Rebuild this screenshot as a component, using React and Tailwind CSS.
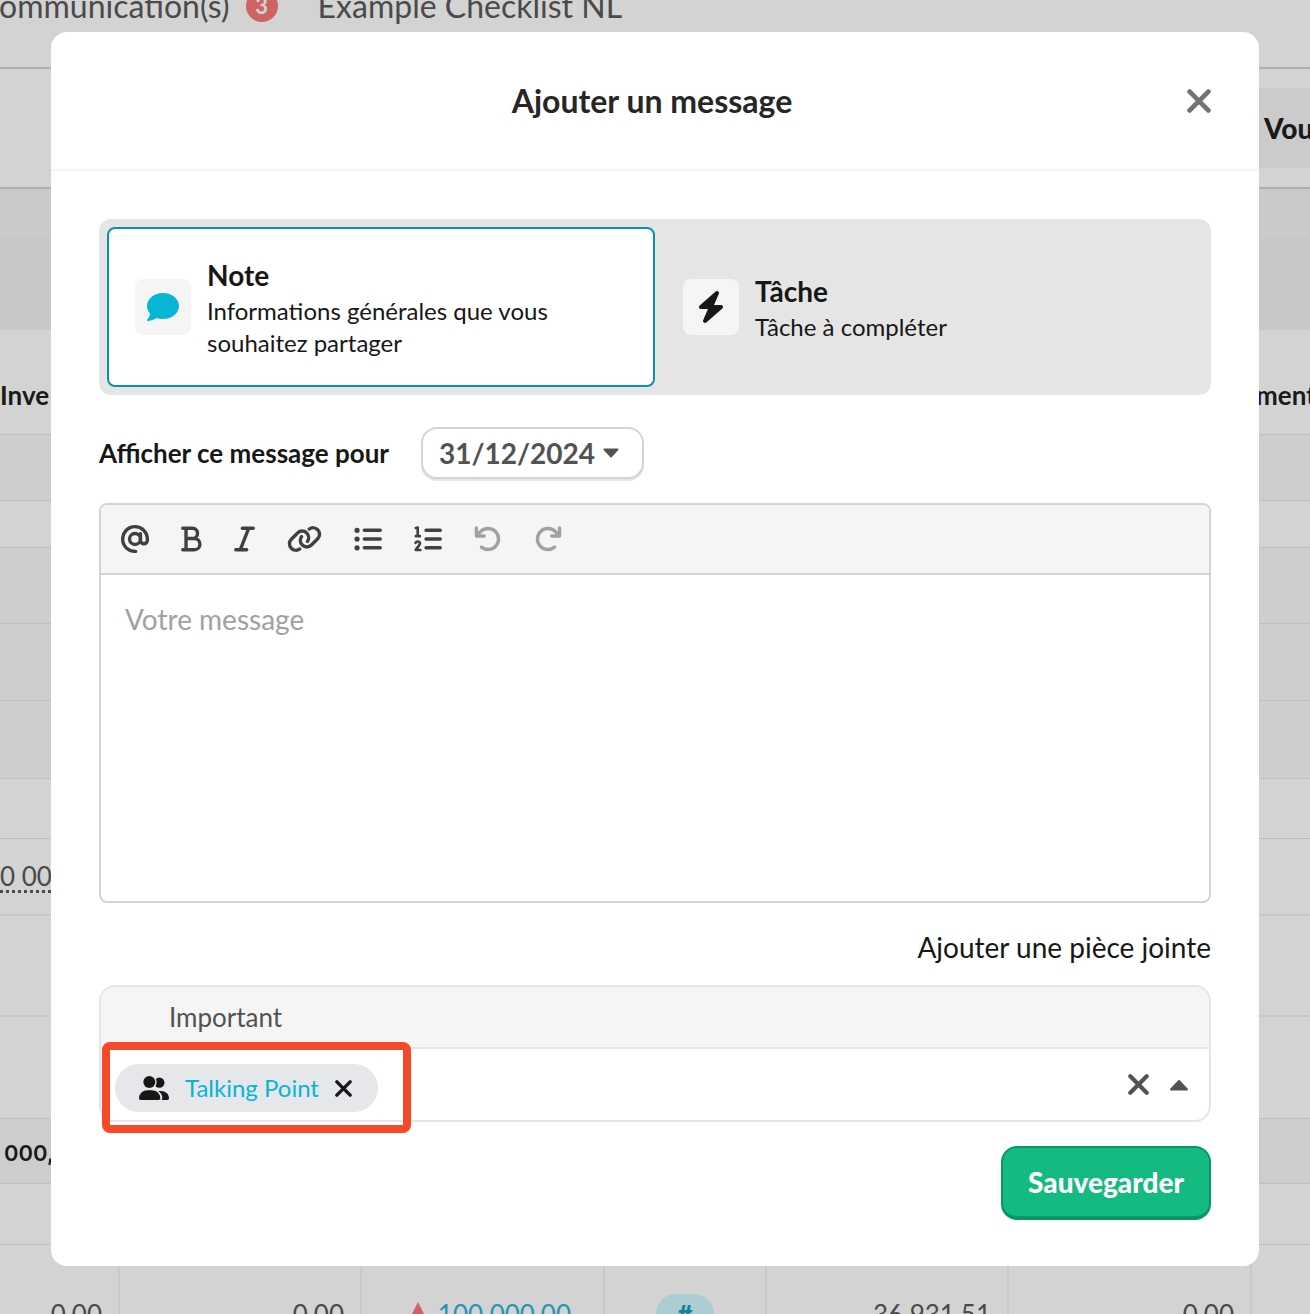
import React from 'react';
import { FaBolt, FaComment } from 'react-icons/fa6';

const ROWS = [
  { className: 'h-[66px] bg-[#cecece] border-b border-[#bfbfbf]' },
  { className: 'h-[47px] border-b border-[#bfbfbf]' },
  { className: 'h-[76px] bg-[#cecece] border-b border-[#bfbfbf]' },
  { className: 'h-[77px] bg-[#cecece] border-b border-[#bfbfbf]' },
  { className: 'h-[78px] bg-[#cecece] border-b border-[#bfbfbf]' },
  { className: 'h-[60px] border-b border-[#bfbfbf]' },
  {
    className: 'h-[77px] border-b-2 border-[#c9c9c9]',
    first: <span className="underline decoration-dotted decoration-3 underline-offset-4">0 00</span>,
  },
  { className: 'h-[101px] border-b-2 border-[#c9c9c9]' },
  { className: 'h-[102px] border-b border-[#bfbfbf]' },
  {
    className: 'h-[65px] bg-[#cdcdcd] border-b border-[#bfbfbf]',
    first: <span className="pl-1 font-['Inter',sans-serif] text-[22px] font-semibold text-[#1a1a1a]">000,</span>,
  },
  { className: 'h-[61px] border-b border-[#bfbfbf]' },
];

const CrossIcon = ({ className, strokeWidth = 4 }) => (
  <svg className={className} viewBox="0 0 20 20" fill="none" stroke="currentColor" strokeWidth={strokeWidth} strokeLinecap="round">
    <path d="M2.2 2.2L17.8 17.8M17.8 2.2L2.2 17.8" />
  </svg>
);

const CaretDown = ({ className }) => (
  <svg className={className} viewBox="0 0 18 11" fill="currentColor" stroke="currentColor" strokeWidth="2" strokeLinejoin="round">
    <path d="M1.5 1.5H16.5L9 9.5Z" />
  </svg>
);

const CaretUp = ({ className }) => (
  <svg className={className} viewBox="0 0 20 12" fill="currentColor" stroke="currentColor" strokeWidth="2" strokeLinejoin="round">
    <path d="M2 10.5H18L10 2Z" />
  </svg>
);

const UsersIcon = ({ className }) => (
  <svg className={className} viewBox="0 0 90 72" fill="currentColor">
    <circle cx="61" cy="20" r="15.5" />
    <circle cx="31" cy="18" r="22" className="fill-gray-200" />
    <circle cx="31" cy="18" r="18" />
    <path d="M0 67C0 53 12 43 26 43h12c14 0 26 10 26 24 0 3-2 5-5 5H5c-3 0-5-2-5-5z" />
    <path d="M57 45h9c13 0 24 9 24 22 0 3-2 5-5 5H67c2-2 3-4 3-6 0-9-5-16-13-21z" />
  </svg>
);

const TOOLS = [
  {
    label: 'Mention',
    width: 'w-7',
    viewBox: '0 0 512 512',
    icon: (
      <>
        <circle cx="256" cy="256" r="100" />
        <path d="M356 160v120a63 63 0 0 0 126 0v-24A226 226 0 1 0 268 482" />
      </>
    ),
  },
  {
    label: 'Gras',
    width: 'w-[21px]',
    viewBox: '0 0 384 512',
    icon: <path d="M32 60H208a94 94 0 0 1 0 188H92M92 60V452M92 248H244a102 102 0 0 1 0 204H32" />,
  },
  {
    label: 'Italique',
    width: 'w-[21px]',
    viewBox: '0 0 384 512',
    icon: <path d="M152 60H352M32 452H232M268 60L116 452" />,
  },
  {
    label: 'Lien',
    width: 'w-[35px]',
    viewBox: '0 0 640 512',
    icon: (
      <>
        <path d="M406 74C454 40 519 45 561 86C607 132 607 206 561 252L446 367C400 413 326 413 280 367C238 326 233 260 267 212" />
        <path transform="rotate(180 320 256)" d="M406 74C454 40 519 45 561 86C607 132 607 206 561 252L446 367C400 413 326 413 280 367C238 326 233 260 267 212" />
      </>
    ),
  },
  {
    label: 'Liste à puces',
    width: 'w-7',
    viewBox: '0 0 512 512',
    icon: (
      <>
        <path d="M188 96H480M188 256H480M188 416H480" />
        <path strokeWidth="96" d="M56 96h.1M56 256h.1M56 416h.1" />
      </>
    ),
  },
  {
    label: 'Liste numérotée',
    width: 'w-7',
    viewBox: '0 0 512 512',
    icon: (
      <>
        <path d="M220 96H480M220 256H480M220 416H480" />
        <path strokeWidth="48" d="M32 56L68 48V204M32 204H108" />
        <path strokeWidth="48" d="M28 328C48 288 116 296 108 344C104 372 60 408 32 456H116" />
      </>
    ),
  },
  {
    label: 'Annuler',
    width: 'w-7',
    viewBox: '0 0 512 512',
    disabled: true,
    icon: <path d="M44 56V200H188M48 196L120 120A192 192 0 1 1 136 404" />,
  },
  {
    label: 'Rétablir',
    width: 'w-7',
    viewBox: '0 0 512 512',
    disabled: true,
    icon: <path d="M468 56V200H324M464 196L392 120A192 192 0 1 0 376 404" />,
  },
];

const Background = () => (
  <div className="text-[26px] text-[#4a4a4a]">
    <nav className="flex h-[69px] items-start border-b-2 border-[#b0b0b0]">
      <div className="-mt-3.5 -ml-[22px] flex items-center whitespace-nowrap text-[32px] leading-10">
        <a href="#communications">Communication(s)</a>
        <span className="ml-4 flex size-8 items-center justify-center rounded-full bg-[#cf6263] text-[22px] font-bold text-[#d3d3d3]">3</span>
        <a href="#checklist" className="ml-10">Example Checklist NL</a>
      </div>
    </nav>
    <div className="flex h-[120px] items-center justify-end border-b-2 border-[#b0b0b0]">
      <div className="flex h-20 w-16 items-center overflow-hidden bg-[#cbcbcb] pl-[18px] text-[28px] font-black text-[#1a1a1a]">Vou</div>
    </div>
    <div className="h-[47px] bg-[#cacaca]" />
    <div className="h-[94px] bg-[#c8c8ca]" />
    <table className="w-full table-fixed border-separate border-spacing-0">
      <colgroup>
        <col className="w-[120px]" />
        <col className="w-[242px]" />
        <col className="w-[243px]" />
        <col className="w-[162px]" />
        <col className="w-[242px]" />
        <col className="w-[243px]" />
        <col />
      </colgroup>
      <thead>
        <tr className="text-left font-bold text-[#1a1a1a]">
          <th className="h-[105px] border-b border-[#bfbfbf] pt-[26px]">Inve</th>
          <th colSpan={5} className="border-b border-[#bfbfbf]" />
          <th className="border-b border-[#bfbfbf] pt-[26px] pl-1">ment</th>
        </tr>
      </thead>
      <tbody>
        {ROWS.map((row, i) => (
          <tr key={i}>
            <td className={row.className}>{row.first}</td>
            <td colSpan={6} className={row.className} />
          </tr>
        ))}
        <tr className="text-right">
          <td className="h-[138px] border-r-2 border-[#c9c9c9] pr-4">0,00</td>
          <td className="border-r-2 border-[#c9c9c9] pr-4">0,00</td>
          <td className="border-r-2 border-[#c9c9c9] pr-8 text-[#1f97b3]">
            <span className="flex items-center justify-end gap-2">
              <svg className="size-6 text-[#cf6263]" viewBox="0 0 20 20" fill="currentColor">
                <path d="M10 0L20 20H0Z" />
              </svg>
              100 000,00
            </span>
          </td>
          <td className="border-r-2 border-[#c9c9c9] text-center">
            <span className="inline-flex h-10 w-[58px] items-center justify-center rounded-full bg-[#accdd3] font-black text-[#16819f]">#</span>
          </td>
          <td className="border-r-2 border-[#c9c9c9] pr-4">36 931,51</td>
          <td className="border-r-2 border-[#c9c9c9] pr-4">0,00</td>
          <td />
        </tr>
      </tbody>
    </table>
  </div>
);

const TypeOption = ({ icon, title, text, selected }) => (
  <button
    type="button"
    aria-pressed={selected}
    className={`flex min-h-40 flex-1 items-center gap-4 rounded-lg border-2 px-[26px] text-left ${selected ? 'border-[#0891b2] bg-white' : 'border-transparent'}`}
  >
    <span className="flex size-14 shrink-0 items-center justify-center rounded-lg bg-neutral-100">{icon}</span>
    <span>
      <span className="block text-[28px] leading-10 font-bold">{title}</span>
      <span className="block text-2xl leading-8">{text}</span>
    </span>
  </button>
);

const MessageModal = () => (
  <div role="dialog" aria-labelledby="modal-title" className="rounded-2xl bg-white text-neutral-900">
    <header className="grid h-[139px] grid-cols-[1fr_auto_1fr] items-center border-b-2 border-neutral-100 pr-12 pl-[42px]">
      <h1 id="modal-title" className="col-start-2 text-[32px] leading-10 font-bold text-neutral-800">Ajouter un message</h1>
      <button type="button" aria-label="Fermer" className="justify-self-end text-neutral-500">
        <CrossIcon className="size-6" />
      </button>
    </header>

    <form className="px-12 pt-12 pb-[46px]">
      <div className="flex rounded-xl bg-neutral-200 p-2">
        <TypeOption
          selected
          icon={<FaComment className="size-8 text-[#06b6d4]" />}
          title="Note"
          text="Informations générales que vous souhaitez partager"
        />
        <TypeOption icon={<FaBolt className="size-8" />} title="Tâche" text="Tâche à compléter" />
      </div>

      <div className="mt-8 flex items-center gap-8">
        <label htmlFor="date" className="text-[26px] font-bold">Afficher ce message pour</label>
        <div className="relative text-neutral-600">
          <select id="date" className="block h-[52px] appearance-none rounded-2xl border-2 border-neutral-300 bg-white pr-[46px] pl-4 text-[28px] font-bold shadow-[0_2px_0_#e5e5e5]">
            <option>31/12/2024</option>
          </select>
          <CaretDown className="pointer-events-none absolute top-[21px] right-[25px] h-[10px] w-4" />
        </div>
      </div>

      <div className="mt-6 overflow-hidden rounded-lg border-2 border-neutral-300">
        <div className="flex h-[70px] items-center gap-8 border-b-2 border-neutral-300 bg-neutral-100 px-5">
          {TOOLS.map((tool) => (
            <button key={tool.label} type="button" aria-label={tool.label} disabled={tool.disabled} className="text-neutral-700 disabled:text-neutral-400">
              <svg
                className={`h-7 ${tool.width}`}
                viewBox={tool.viewBox}
                fill="none"
                stroke="currentColor"
                strokeWidth="62"
                strokeLinecap="round"
                strokeLinejoin="round"
              >
                {tool.icon}
              </svg>
            </button>
          ))}
        </div>
        <textarea
          aria-label="Votre message"
          placeholder="Votre message"
          className="block min-h-[326px] w-full resize-none px-6 py-6 text-[28px] leading-10 outline-none placeholder:text-neutral-400"
        />
      </div>

      <div className="mt-6 mb-[18px] flex justify-end">
        <button type="button" className="text-[28px] leading-10">Ajouter une pièce jointe</button>
      </div>

      <div className="rounded-2xl border-2 border-neutral-200">
        <div className="flex h-[62px] items-center rounded-t-[14px] border-b-2 border-neutral-200 bg-neutral-100 pl-[68px] text-[26px] text-neutral-600">
          Important
        </div>
        <div className="flex items-center justify-between pr-5 pl-[14px] text-neutral-600">
          <div className="relative mt-[15px] mb-2 flex h-12 items-center gap-4 rounded-full bg-gray-200 pr-[26px] pl-6 text-neutral-900">
            <UsersIcon className="h-6 w-[30px]" />
            <span className="text-2xl text-[#06b6d4]">Talking Point</span>
            <button type="button" aria-label="Retirer Talking Point">
              <CrossIcon className="size-[17px]" />
            </button>
            <span className="pointer-events-none absolute -top-[22px] -right-[33px] -bottom-[21px] -left-[13px] rounded-lg border-8 border-[#f54927]" />
          </div>
          <div className="flex items-center gap-5">
            <button type="button" aria-label="Tout effacer">
              <CrossIcon className="size-[21px]" />
            </button>
            <button type="button" aria-label="Fermer la liste">
              <CaretUp className="h-3 w-5" />
            </button>
          </div>
        </div>
      </div>

      <div className="mt-6 flex justify-end">
        <button type="submit" className="h-[74px] rounded-2xl border-2 border-b-4 border-[#059669] bg-[#15ba81] px-[25px] text-[28px] font-black text-white">
          Sauvegarder
        </button>
      </div>
    </form>
  </div>
);

export default function App() {
  return (
    <div className="h-screen overflow-hidden bg-[#d3d3d3] font-['Lato',sans-serif]">
      <Background />
      <div className="fixed inset-0 overflow-y-auto px-[51px] py-8">
        <MessageModal />
      </div>
    </div>
  );
}
